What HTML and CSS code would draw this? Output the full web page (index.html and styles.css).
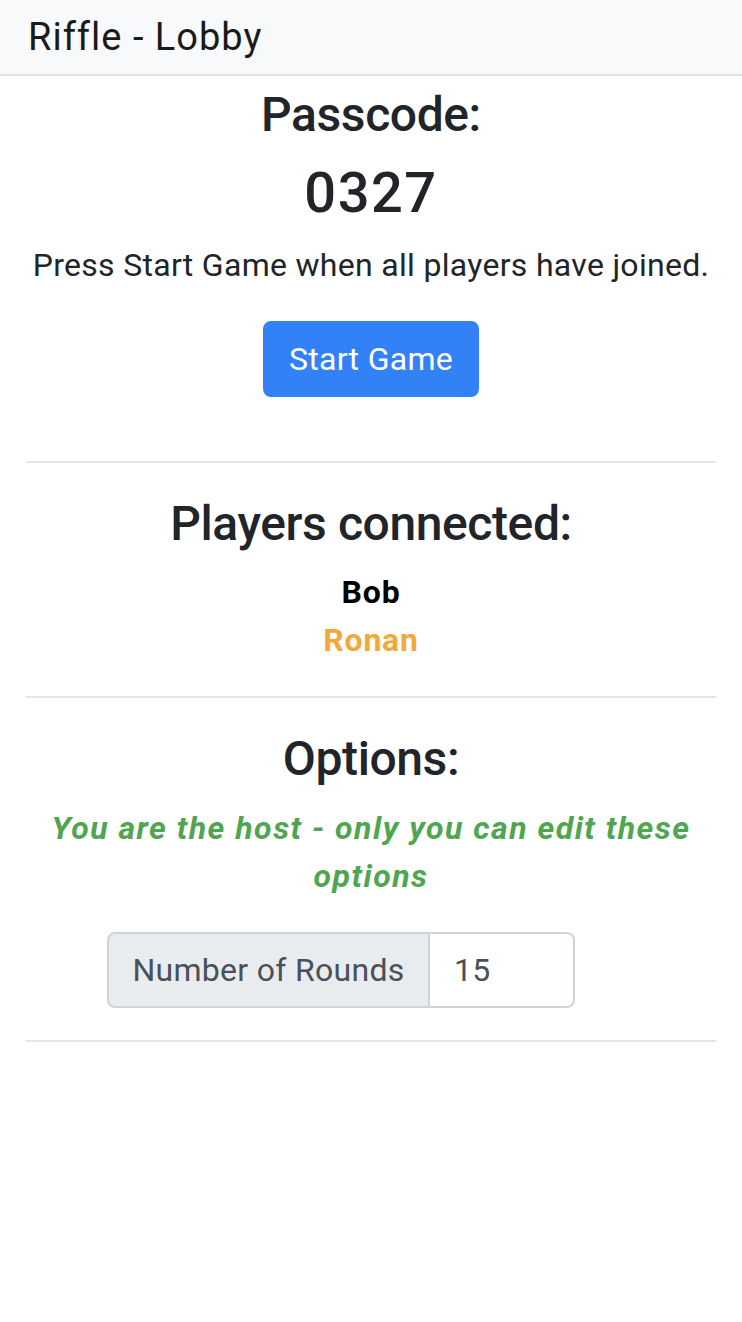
FILE: index.html
```html
<!DOCTYPE html>
<html lang="en">
<head>
<meta charset="utf-8">
<title>Riffle - Lobby</title>
<link rel="stylesheet" href="styles.css">
</head>
<body>
<header class="topbar">
  <span class="brand">Riffle - Lobby</span>
</header>
<main class="content">
  <section class="section">
    <h4 class="heading">Passcode:</h4>
    <h3 class="code">0327</h3>
    <p class="hint">Press Start Game when all players have joined.</p>
    <button class="btn-start" type="button">Start Game</button>
  </section>
  <hr class="divider">
  <section class="section">
    <h4 class="heading">Players connected:</h4>
    <div class="player player-self">Bob</div>
    <div class="player player-other">Ronan</div>
  </section>
  <hr class="divider">
  <section class="section">
    <h4 class="heading">Options:</h4>
    <p class="host-note">You are the host - only you can edit these options</p>
    <div class="input-group">
      <span class="input-label">Number of Rounds</span>
      <input class="input-field" type="text" value="15">
    </div>
  </section>
  <hr class="divider">
</main>
</body>
</html>
```

FILE: styles.css
```css
* { box-sizing: border-box; }

body {
  margin: 0;
  font-family: Roboto, "Noto Sans", sans-serif;
  font-size: 32px;
  line-height: 1.5;
  color: #212529;
  background: #fff;
  letter-spacing: 0.3px;
}

.topbar {
  height: 76px;
  background: #f8f9fa;
  border-bottom: 2px solid #dee2e6;
  display: flex;
  align-items: center;
  padding-left: 28px;
}

.brand {
  font-size: 38px;
  color: #1a1a1a;
  line-height: 1;
  letter-spacing: 1px;
}

.content {
  padding: 10px 26px 0;
}

.section {
  text-align: center;
}

.heading {
  margin: 0 0 16px;
  font-size: 48px;
  font-weight: 500;
  line-height: 1.2;
  letter-spacing: -0.4px;
}

.code {
  margin: 0 0 14px;
  font-size: 56px;
  font-weight: 500;
  line-height: 1.2;
  letter-spacing: 1.5px;
}

.hint {
  margin: 0 0 32px;
}

.btn-start {
  font-family: inherit;
  font-size: 32px;
  line-height: 48px;
  letter-spacing: 0.3px;
  color: #fff;
  background: #3281f6;
  border: 2px solid #3281f6;
  border-radius: 8px;
  padding: 12px 24px;
  margin-bottom: 32px;
  cursor: pointer;
}

.divider {
  margin: 32px 0;
  border: 0;
  border-top: 2px solid #e5e5e5;
}

.player {
  font-weight: 700;
  line-height: 48px;
  letter-spacing: 0.8px;
}

.player-self { color: #000; }
.player-other { color: #f4a83a; }

.host-note {
  margin: 0 0 32px;
  font-weight: 700;
  font-style: italic;
  color: #4fa550;
  letter-spacing: 1.5px;
}

.input-group {
  display: flex;
  width: 528px;
  margin: 0 auto;
  height: 76px;
}

.input-label {
  display: flex;
  align-items: center;
  justify-content: center;
  width: 323px;
  flex: 0 0 323px;
  background: #e9ecef;
  border: 2px solid #ced4da;
  border-radius: 8px 0 0 8px;
  color: #495057;
  white-space: nowrap;
}

.input-field {
  width: 145px;
  flex: 0 0 145px;
  font-family: inherit;
  font-size: 32px;
  letter-spacing: 0.3px;
  color: #495057;
  padding: 0 24px;
  border: 2px solid #ced4da;
  border-left-width: 0;
  border-radius: 0 8px 8px 0;
  background: #fff;
}
```
